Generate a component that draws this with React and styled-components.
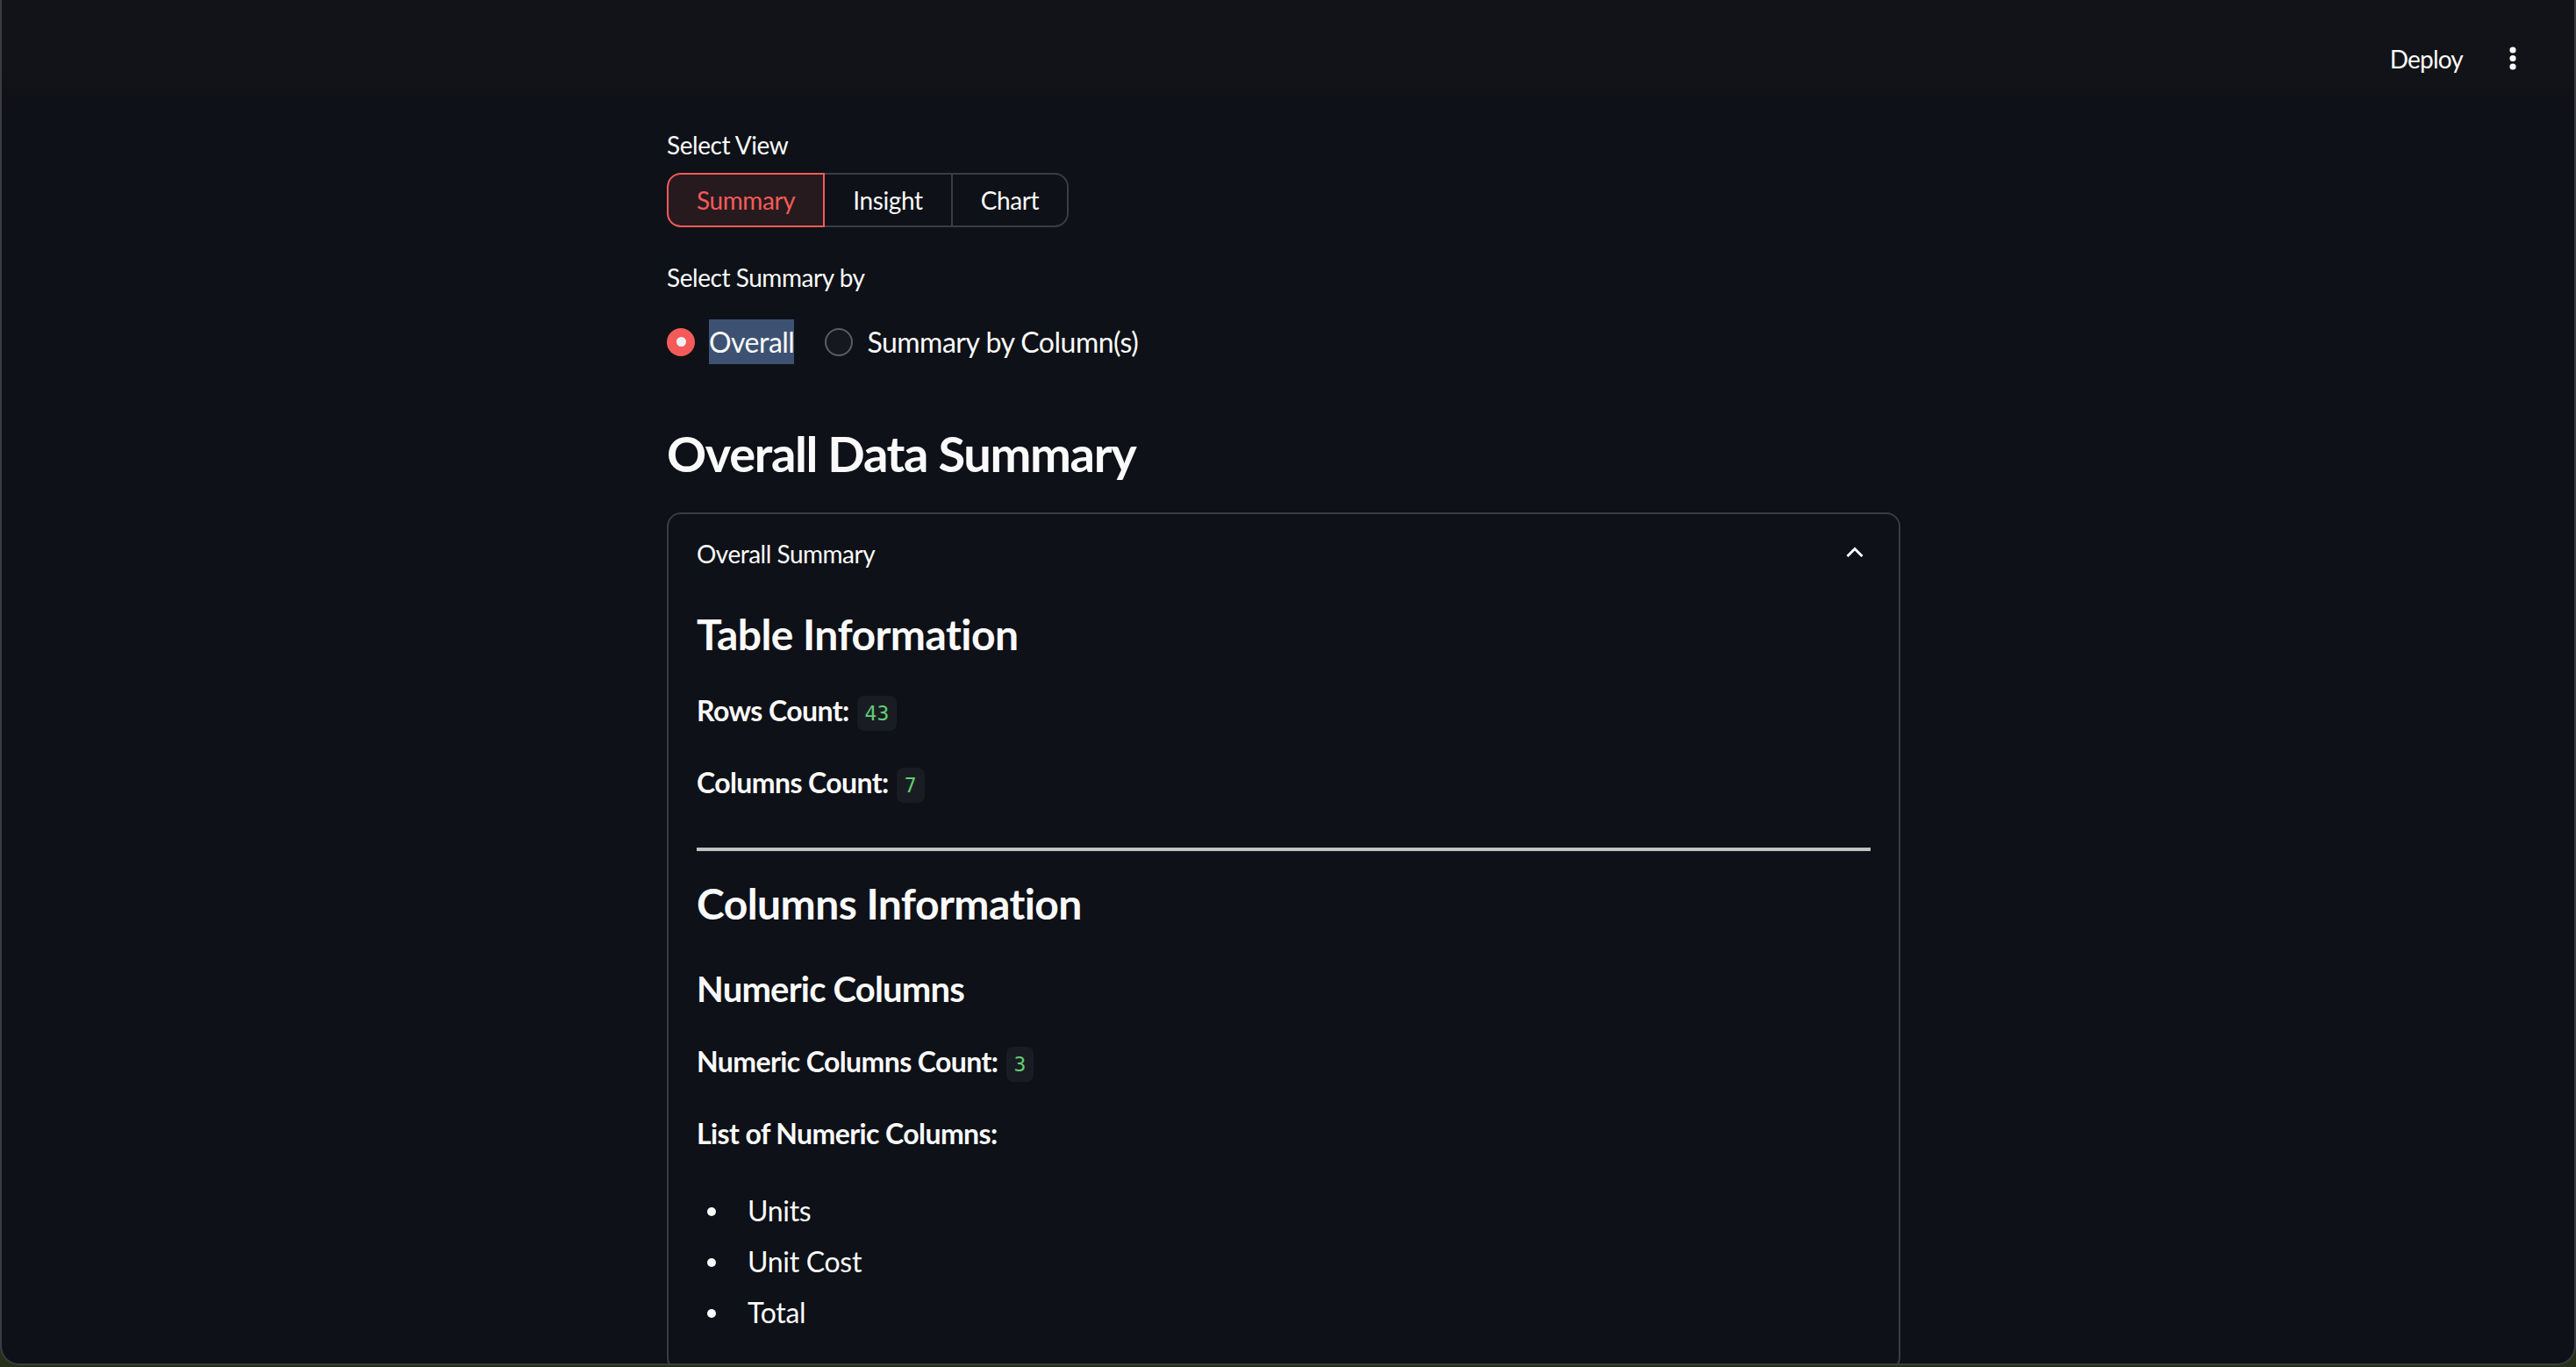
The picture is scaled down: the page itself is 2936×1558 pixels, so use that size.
import React, { useState } from "react";
import styled, { createGlobalStyle } from "styled-components";

const GlobalStyle = createGlobalStyle`
  html, body {
    margin: 0;
    padding: 0;
    background: #243018;
  }
  body {
    font-family: Lato, "Noto Sans", sans-serif;
    color: #fafafa;
    -webkit-font-smoothing: antialiased;
  }
  * { box-sizing: border-box; }
`;

const Window = styled.div`
  height: 1556px;
  background: #0e1117;
  border: solid #3b3c41;
  border-width: 0 2px 2px 2px;
  border-radius: 0 0 22px 22px;
  overflow: hidden;
  display: flex;
  flex-direction: column;
`;

const Header = styled.header`
  flex: none;
  height: 120px;
  padding: 14px 50px 0 0;
  display: flex;
  align-items: center;
  justify-content: flex-end;
  gap: 37px;
  background: linear-gradient(to bottom, #121318 0%, #121318 70%, #0e1117 100%);
`;

const DeployButton = styled.button`
  background: none;
  border: none;
  color: #fafafa;
  font-family: inherit;
  font-size: 28px;
  letter-spacing: -0.8px;
  padding: 0;
  cursor: pointer;
`;

const MenuButton = styled.button`
  width: 40px;
  height: 40px;
  display: flex;
  align-items: center;
  justify-content: center;
  background: none;
  border: none;
  padding: 0;
  color: #fafafa;
`;

const Body = styled.main`
  flex: 1;
  padding-right: 10px;
  overflow: hidden;
`;

const Column = styled.div`
  width: 1406px;
  margin: 0 auto;
`;

const Label = styled.div`
  margin-top: ${(p) => p.$mt}px;
  font-size: 28px;
  line-height: 44px;
  letter-spacing: -0.45px;
`;

const Segmented = styled.div`
  margin-top: 10px;
  display: inline-flex;
  height: 62px;
`;

const Segment = styled.button`
  position: relative;
  z-index: ${(p) => (p.$active ? 1 : 0)};
  height: 62px;
  padding: 0 32px;
  margin-left: -2px;
  font-family: inherit;
  font-size: 28px;
  letter-spacing: -0.4px;
  color: ${(p) => (p.$active ? "#f45b58" : "#fafafa")};
  background: ${(p) => (p.$active ? "#261a1e" : "transparent")};
  border: 2px solid ${(p) => (p.$active ? "#f45b58" : "#3b3d43")};
  border-radius: 0;
  cursor: pointer;
  &:first-child {
    margin-left: 0;
    border-radius: 16px 0 0 16px;
  }
  &:last-child {
    border-radius: 0 16px 16px 0;
  }
`;

const RadioRow = styled.div`
  margin-top: 26px;
  height: 51px;
  display: flex;
  align-items: center;
  gap: 35px;
`;

const RadioOption = styled.label`
  display: flex;
  align-items: center;
  gap: 16px;
  font-size: 32px;
  line-height: 51px;
  letter-spacing: -0.5px;
  cursor: pointer;
`;

const RadioDot = styled.span`
  width: 32px;
  height: 32px;
  border-radius: 50%;
  display: flex;
  align-items: center;
  justify-content: center;
  background: ${(p) => (p.$checked ? "#f45b58" : "#15181f")};
  border: ${(p) => (p.$checked ? "none" : "2px solid #5b5d63")};
  &::after {
    content: "";
    display: ${(p) => (p.$checked ? "block" : "none")};
    width: 11px;
    height: 11px;
    border-radius: 50%;
    background: #eef0f5;
  }
`;

const Highlight = styled.span`
  display: inline-block;
  background: #3d5273;
  line-height: 51px;
`;

const PageTitle = styled.h3`
  margin: 68px 0 0;
  font-size: 56px;
  line-height: 68px;
  font-weight: 700;
  letter-spacing: -1.35px;
`;

const Expander = styled.section`
  margin-top: 33px;
  border: 2px solid #3b3c42;
  border-radius: 16px;
  padding-bottom: 40px;
`;

const ExpanderHead = styled.div`
  height: 90px;
  padding: 0 40px 0 32px;
  display: flex;
  align-items: center;
  justify-content: space-between;
  font-size: 28px;
  letter-spacing: -0.5px;
`;

const ExpanderBody = styled.div`
  padding: 0 32px;
`;

const Heading = styled.h4`
  margin: ${(p) => p.$mt}px 0 0;
  font-size: ${(p) => p.$size}px;
  line-height: ${(p) => Math.round(p.$size * 1.2)}px;
  font-weight: 700;
  letter-spacing: ${(p) => (p.$size > 44 ? -0.55 : -0.8)}px;
`;

const Para = styled.p`
  margin: ${(p) => p.$mt}px 0 0;
  font-size: 32px;
  line-height: 51px;
  font-weight: 700;
  letter-spacing: -0.6px;
`;

const Code = styled.code`
  display: inline-block;
  margin-left: 9px;
  padding: 5px 9px;
  font-family: "DejaVu Sans Mono", "Liberation Mono", monospace;
  font-size: 23px;
  line-height: 30px;
  font-weight: 400;
  letter-spacing: 0;
  color: #62cc74;
  background: #1a1c23;
  border-radius: 8px;
  vertical-align: 1px;
`;

const Rule = styled.hr`
  margin: 49px 0 0;
  height: 4px;
  border: none;
  background: #c2c2c2;
`;

const List = styled.ul`
  margin: 37px 0 0;
  padding: 0;
  list-style: none;
  display: flex;
  flex-direction: column;
  gap: 7px;
`;

const Item = styled.li`
  display: flex;
  align-items: center;
  font-size: 32px;
  line-height: 51px;
  letter-spacing: -0.3px;
  &::before {
    content: "";
    width: 10px;
    height: 10px;
    border-radius: 50%;
    background: #fafafa;
    margin: 2px 36px 0 12px;
  }
`;

const Dots = () => (
  <svg width="8" height="28" viewBox="0 0 8 28">
    <circle cx="4" cy="4" r="3.6" fill="currentColor" />
    <circle cx="4" cy="13.5" r="3.6" fill="currentColor" />
    <circle cx="4" cy="23" r="3.6" fill="currentColor" />
  </svg>
);

const Chevron = () => (
  <svg width="20" height="13" viewBox="0 0 20 13" style={{ marginTop: -4 }}>
    <polyline points="1.5,11 10,2.5 18.5,11" fill="none" stroke="#fafafa" strokeWidth="3" />
  </svg>
);

const views = ["Summary", "Insight", "Chart"];
const numericCols = ["Units", "Unit Cost", "Total"];

export default function App() {
  const [view, setView] = useState("Summary");
  const [mode, setMode] = useState("overall");

  return (
    <Window>
      <GlobalStyle />
      <Header>
        <DeployButton>Deploy</DeployButton>
        <MenuButton aria-label="menu">
          <Dots />
        </MenuButton>
      </Header>
      <Body>
        <Column>
          <Label $mt={23}>Select View</Label>
          <Segmented>
            {views.map((v) => (
              <Segment key={v} $active={view === v} onClick={() => setView(v)}>
                {v}
              </Segment>
            ))}
          </Segmented>

          <Label $mt={35}>Select Summary by</Label>
          <RadioRow>
            <RadioOption onClick={() => setMode("overall")}>
              <RadioDot $checked={mode === "overall"} />
              <Highlight>Overall</Highlight>
            </RadioOption>
            <RadioOption onClick={() => setMode("column")}>
              <RadioDot $checked={mode === "column"} />
              Summary by Column(s)
            </RadioOption>
          </RadioRow>

          <PageTitle>Overall Data Summary</PageTitle>

          <Expander>
            <ExpanderHead>
              <span>Overall Summary</span>
              <Chevron />
            </ExpanderHead>
            <ExpanderBody>
              <Heading $mt={18} $size={48}>Table Information</Heading>
              <Para $mt={32}>
                Rows Count:<Code>43</Code>
              </Para>
              <Para $mt={31}>
                Columns Count:<Code>7</Code>
              </Para>
              <Rule />
              <Heading $mt={31} $size={48}>Columns Information</Heading>
              <Heading $mt={44} $size={40}>Numeric Columns</Heading>
              <Para $mt={33}>
                Numeric Columns Count:<Code>3</Code>
              </Para>
              <Para $mt={31}>List of Numeric Columns:</Para>
              <List>
                {numericCols.map((c) => (
                  <Item key={c}>{c}</Item>
                ))}
              </List>
            </ExpanderBody>
          </Expander>
        </Column>
      </Body>
    </Window>
  );
}
